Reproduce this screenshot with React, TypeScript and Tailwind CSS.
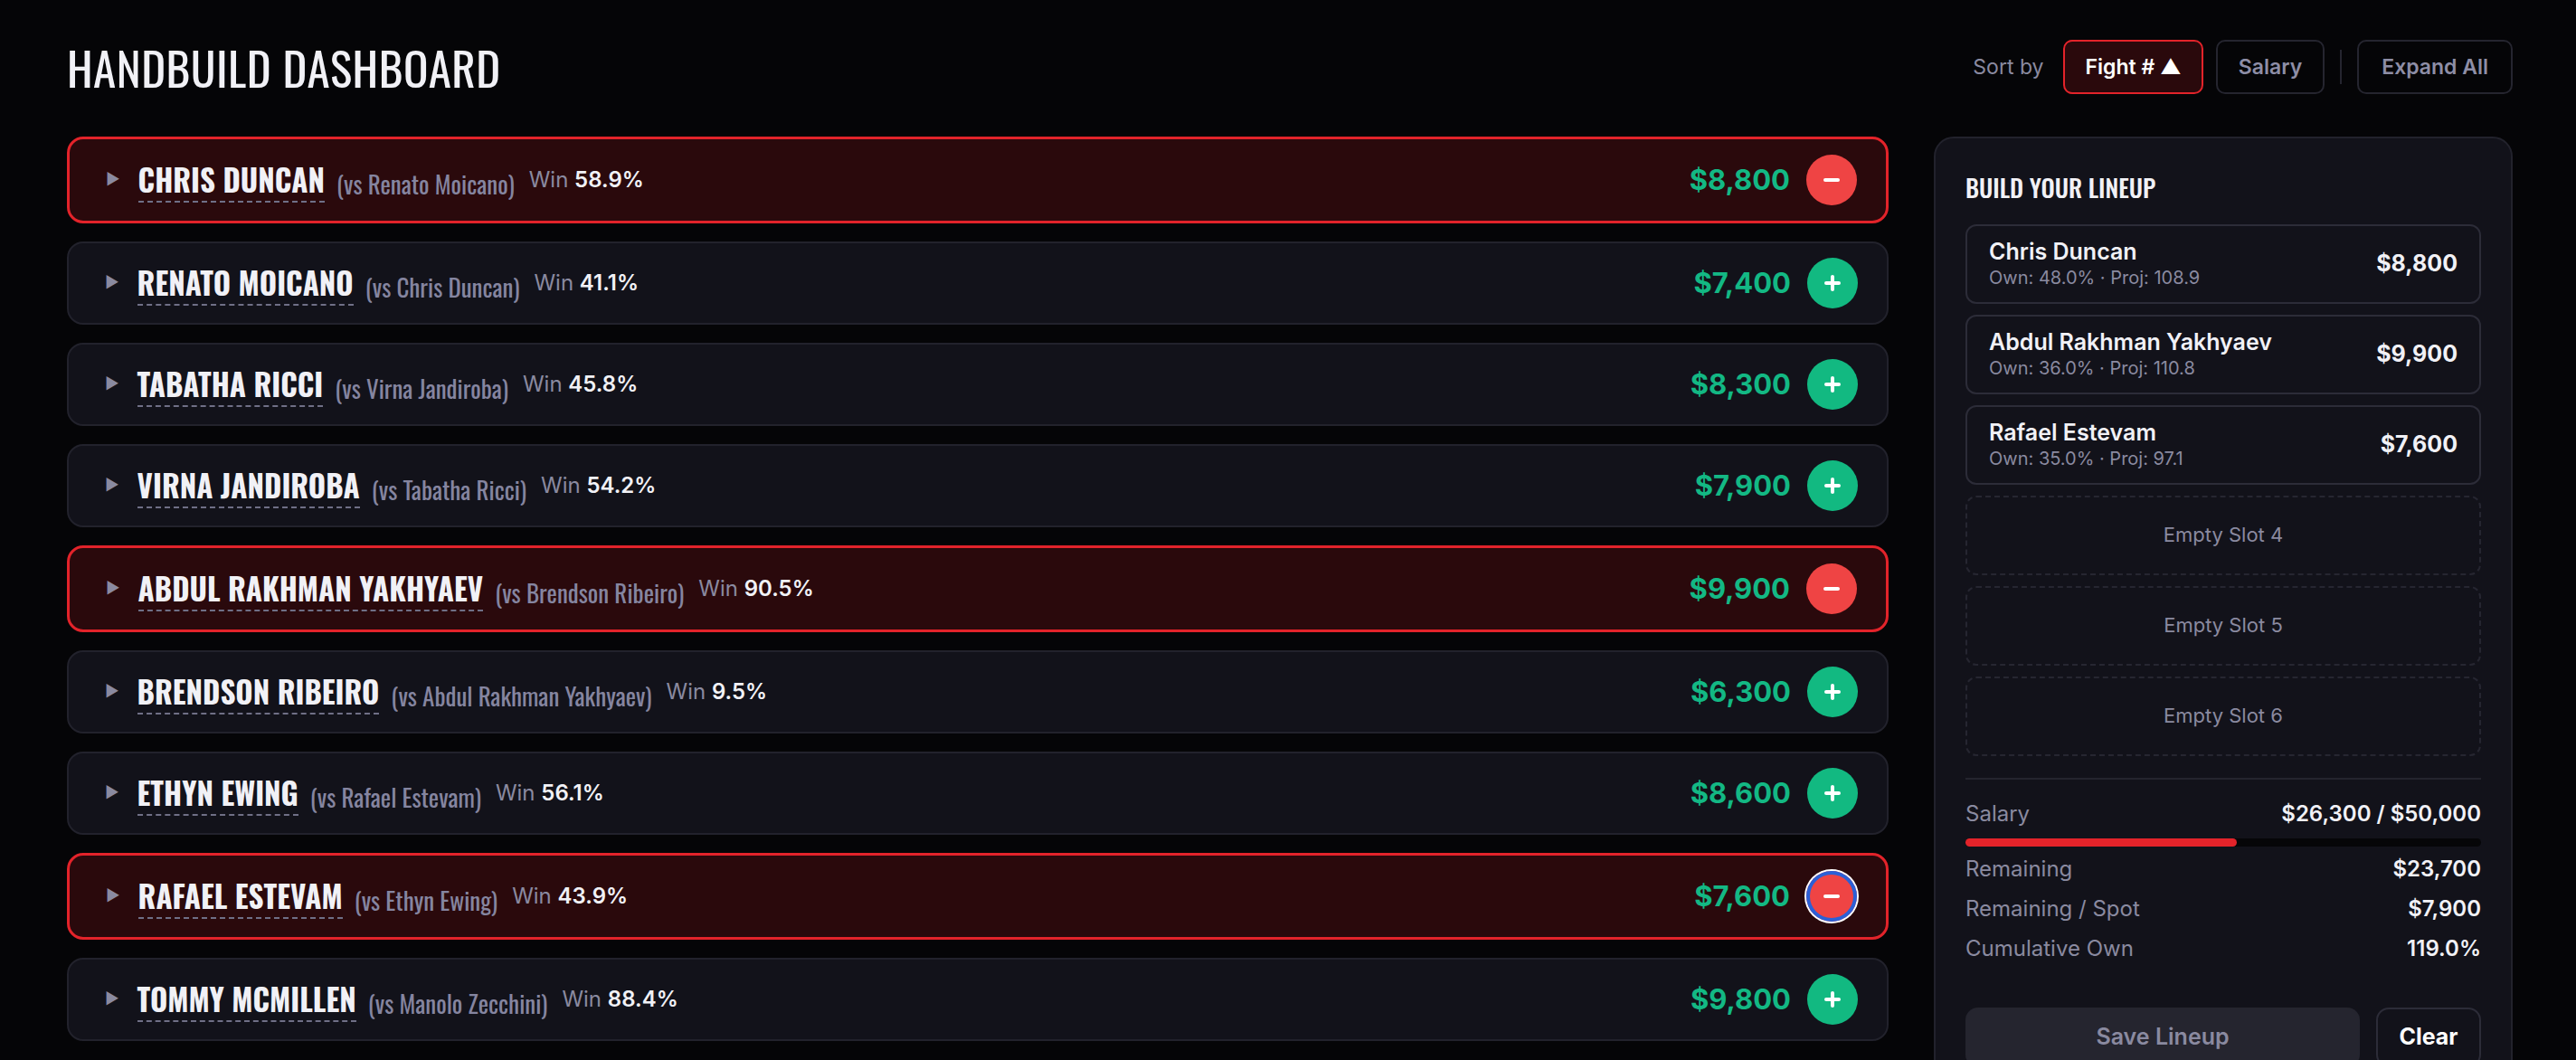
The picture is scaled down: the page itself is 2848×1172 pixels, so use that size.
import { Plus, Minus } from 'lucide-react';

type Fighter = {
  name: string;
  opp: string;
  win: string;
  salary: string;
  picked: boolean;
  focus?: boolean;
};

const FIGHTERS: Fighter[] = [
  { name: 'Chris Duncan', opp: 'Renato Moicano', win: '58.9%', salary: '$8,800', picked: true },
  { name: 'Renato Moicano', opp: 'Chris Duncan', win: '41.1%', salary: '$7,400', picked: false },
  { name: 'Tabatha Ricci', opp: 'Virna Jandiroba', win: '45.8%', salary: '$8,300', picked: false },
  { name: 'Virna Jandiroba', opp: 'Tabatha Ricci', win: '54.2%', salary: '$7,900', picked: false },
  { name: 'Abdul Rakhman Yakhyaev', opp: 'Brendson Ribeiro', win: '90.5%', salary: '$9,900', picked: true },
  { name: 'Brendson Ribeiro', opp: 'Abdul Rakhman Yakhyaev', win: '9.5%', salary: '$6,300', picked: false },
  { name: 'Ethyn Ewing', opp: 'Rafael Estevam', win: '56.1%', salary: '$8,600', picked: false },
  { name: 'Rafael Estevam', opp: 'Ethyn Ewing', win: '43.9%', salary: '$7,600', picked: true, focus: true },
  { name: 'Tommy McMillen', opp: 'Manolo Zecchini', win: '88.4%', salary: '$9,800', picked: false },
];

const LINEUP = [
  { name: 'Chris Duncan', own: '48.0%', proj: '108.9', salary: '$8,800' },
  { name: 'Abdul Rakhman Yakhyaev', own: '36.0%', proj: '110.8', salary: '$9,900' },
  { name: 'Rafael Estevam', own: '35.0%', proj: '97.1', salary: '$7,600' },
];

const cond = "font-['Oswald','Liberation_Sans_Narrow','DejaVu_Sans_Condensed',sans-serif]";

function FighterRow({ f }: { f: Fighter }) {
  return (
    <div
      className={`flex items-center rounded-[18px] pl-[40px] pr-[32px] ${
        f.picked ? 'h-[96px] border-[3px] border-[#e3232a] bg-[#2a090c]' : 'h-[92px] border-2 border-[#22222c] bg-[#12121a]'
      }`}
    >
      <span className="mr-[20px] text-[17px] text-[#8a8aa0]">▶</span>
      <span className={`${cond} mt-[4px] border-b-2 border-dashed border-[#6f6f86] pb-[3px] text-[33px] font-bold uppercase leading-[40px] text-[#f1f1f6]`}>
        {f.name}
      </span>
      <span className={`${cond} ml-[13px] mt-[8px] text-[27px] text-[#8585a0]`}>(vs {f.opp})</span>
      <span className="ml-[16px] text-[24px] text-[#8a8aa0]">
        Win <span className="font-semibold text-[#f1f1f6]">{f.win}</span>
      </span>
      <span className="ml-auto text-[31px] font-bold text-[#13b884]">{f.salary}</span>
      <button
        className={`ml-[18px] flex h-[56px] w-[56px] items-center justify-center rounded-full text-white ${
          f.picked ? 'bg-[#ef4444]' : 'bg-[#12b981]'
        } ${f.focus ? 'shadow-[inset_0_0_0_4px_#2b60d6,0_0_0_2px_#ffffff]' : ''}`}
      >
        {f.picked ? <Minus className="h-[24px] w-[24px]" strokeWidth={4} /> : <Plus className="h-[24px] w-[24px]" strokeWidth={4} />}
      </button>
    </div>
  );
}

export default function App() {
  return (
    <div className="min-h-screen bg-[#050507] pl-[74px] pr-[70px] pt-[44px] font-['Inter','Liberation_Sans',sans-serif] text-[#f1f1f6]">
      {/* header */}
      <div className="mb-[47px] flex h-[60px] items-center justify-between">
        <h1 className={`${cond} text-[51px] font-normal uppercase tracking-[0.5px] text-[#f1f1f6]`}>Handbuild Dashboard</h1>
        <div className="flex items-center text-[23px]">
          <span className="mr-[22px] text-[#8a8aa0]">Sort by</span>
          <button className="h-[60px] rounded-[10px] border-2 border-[#e3232a] bg-[#2a090c] px-[22px] font-semibold text-white">Fight # ▲</button>
          <button className="ml-[14px] h-[60px] rounded-[10px] border-2 border-[#25252f] px-[23px] font-semibold text-[#8e8ea6]">Salary</button>
          <div className="mx-[17px] h-[38px] w-[2px] bg-[#25252f]" />
          <button className="h-[60px] rounded-[10px] border-2 border-[#25252f] px-[25px] font-semibold text-[#8e8ea6]">Expand All</button>
        </div>
      </div>

      <div className="flex items-start gap-[50px]">
        {/* fighter list */}
        <div className="flex flex-1 flex-col gap-[20px]">
          {FIGHTERS.map((f) => (
            <FighterRow key={f.name} f={f} />
          ))}
        </div>

        {/* lineup panel */}
        <div className="w-[640px] rounded-[22px] border-2 border-[#22222c] bg-[#12121a] px-[33px] pt-[34px] pb-[40px]">
          <h2 className={`${cond} mb-[20px] text-[27px] font-medium uppercase text-[#f1f1f6]`}>Build Your Lineup</h2>
          <div className="flex flex-col gap-[12px]">
            {LINEUP.map((p) => (
              <div key={p.name} className="flex h-[88px] items-center justify-between rounded-[12px] border-2 border-[#2c2c38] px-[24px]">
                <div className="flex flex-col">
                  <span className="text-[25px] font-semibold leading-[31px]">{p.name}</span>
                  <span className="text-[20px] leading-[27px] text-[#8a8aa0]">
                    Own: {p.own} · Proj: {p.proj}
                  </span>
                </div>
                <span className="text-[25px] font-bold">{p.salary}</span>
              </div>
            ))}
            {[4, 5, 6].map((n) => (
              <div key={n} className="flex h-[88px] items-center justify-center rounded-[12px] border-2 border-dashed border-[#262631] text-[22px] text-[#8a8aa0]">
                Empty Slot {n}
              </div>
            ))}
          </div>

          <div className="mt-[24px] border-t-2 border-[#24242e] pt-[21px] text-[24px] leading-[34px]">
            <div className="flex items-center justify-between">
              <span className="text-[#8a8aa0]">Salary</span>
              <span className="font-semibold">$26,300 / $50,000</span>
            </div>
            <div className="mt-[10px] h-[9px] w-full rounded-full bg-[#060608]">
              <div className="h-full rounded-full bg-[#e3232a]" style={{ width: `${(26300 / 50000) * 100}%` }} />
            </div>
            <div className="mt-[8px] flex flex-col gap-[10px]">
              <div className="flex justify-between">
                <span className="text-[#8a8aa0]">Remaining</span>
                <span className="font-semibold">$23,700</span>
              </div>
              <div className="flex justify-between">
                <span className="text-[#8a8aa0]">Remaining / Spot</span>
                <span className="font-semibold">$7,900</span>
              </div>
              <div className="flex justify-between">
                <span className="text-[#8a8aa0]">Cumulative Own</span>
                <span className="font-semibold">119.0%</span>
              </div>
            </div>
          </div>

          <div className="mt-[48px] flex gap-[18px]">
            <button className="h-[66px] flex-1 rounded-[14px] bg-[#25252f] text-[25px] font-semibold text-[#8a8aa0]">Save Lineup</button>
            <button className="h-[66px] w-[116px] rounded-[14px] border-2 border-[#2c2c38] text-[25px] font-bold text-white">Clear</button>
          </div>
        </div>
      </div>
    </div>
  );
}
